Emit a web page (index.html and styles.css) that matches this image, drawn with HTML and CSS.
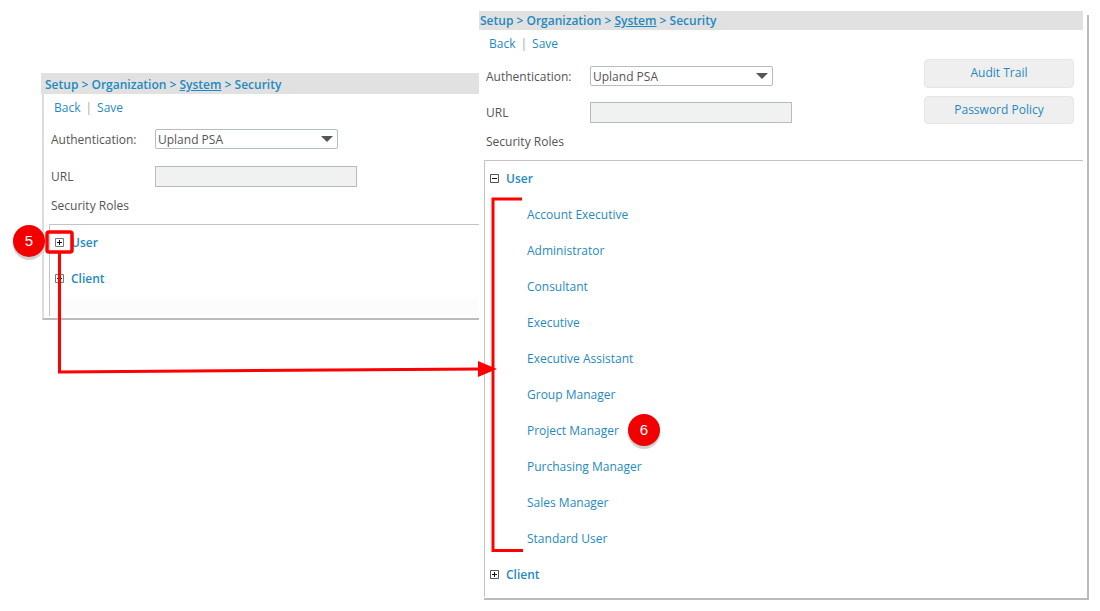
FILE: index.html
```html
<!DOCTYPE html>
<html lang="en">
<head>
<meta charset="utf-8">
<title>Security</title>
<link rel="stylesheet" href="styles.css">
</head>
<body>
<section class="window window-left">
  <div class="crumbs"><span>Setup &gt; Organization &gt; <u>System</u> &gt; Security</span></div>
  <div class="body">
    <div class="actions"><a>Back</a><i>|</i><a>Save</a></div>
    <div class="field field-auth"><label>Authentication:</label><div class="select"><span>Upland PSA</span><b></b></div></div>
    <div class="field field-url"><label>URL</label><div class="input"></div></div>
    <div class="roles">Security Roles</div>
    <div class="tree">
      <div class="node"><svg class="box" viewBox="0 0 9 9"><path d="M.5.5h8v8h-8z" fill="none" stroke="#777"/><path d="M2 4.5h5M4.5 2v5" stroke="#111"/></svg><strong>User</strong></div>
      <div class="node"><svg class="box" viewBox="0 0 9 9"><path d="M.5.5h8v8h-8z" fill="none" stroke="#777"/><path d="M2 4.5h5M4.5 2v5" stroke="#111"/></svg><strong>Client</strong></div>
      <div class="stripe"></div>
    </div>
  </div>
</section>

<section class="window window-right">
  <div class="crumbs"><span>Setup &gt; Organization &gt; <u>System</u> &gt; Security</span></div>
  <div class="body">
    <div class="actions"><a>Back</a><i>|</i><a>Save</a></div>
    <div class="side-buttons"><a class="button">Audit Trail</a><a class="button">Password Policy</a></div>
    <div class="field field-auth"><label>Authentication:</label><div class="select"><span>Upland PSA</span><b></b></div></div>
    <div class="field field-url"><label>URL</label><div class="input"></div></div>
    <div class="roles">Security Roles</div>
    <div class="tree">
      <div class="node"><svg class="box" viewBox="0 0 9 9"><path d="M.5.5h8v8h-8z" fill="none" stroke="#555"/><path d="M2 4.5h5" stroke="#111"/></svg><strong>User</strong></div>
      <ul class="children">
        <li>Account Executive</li>
        <li>Administrator</li>
        <li>Consultant</li>
        <li>Executive</li>
        <li>Executive Assistant</li>
        <li>Group Manager</li>
        <li>Project Manager</li>
        <li>Purchasing Manager</li>
        <li>Sales Manager</li>
        <li>Standard User</li>
      </ul>
      <div class="node"><svg class="box" viewBox="0 0 9 9"><path d="M.5.5h8v8h-8z" fill="none" stroke="#555"/><path d="M2 4.5h5M4.5 2v5" stroke="#111"/></svg><strong>Client</strong></div>
    </div>
  </div>
</section>

<svg class="marks" viewBox="0 0 1100 611" aria-hidden="true">
  <rect x="47" y="232" width="25" height="20" rx="2" fill="none" stroke="#f00" stroke-width="3.500"/>
  <path d="M59.5 253V372L482 369" fill="none" stroke="#f00" stroke-width="3"/>
  <path d="M478 361L497 369L478 377z" fill="#f00"/>
  <path d="M522 199H493V550.500H523" fill="none" stroke="#f00" stroke-width="3"/>
</svg>
<div class="badge badge-5">5</div>
<div class="badge badge-6">6</div>
</body>
</html>
```

FILE: styles.css
```css
* { box-sizing: border-box; }
html, body { margin: 0; padding: 0; background: #fff; }
body {
  width: 1100px;
  height: 611px;
  overflow: hidden;
  position: relative;
  font-family: "Open Sans", "Liberation Sans", sans-serif;
  font-size: 12px;
  color: #555;
}
.window { position: absolute; background: #fff; }
.window-left { left: 41px; top: 73px; width: 438px; height: 247px; overflow: hidden; }
.window-right { left: 479px; top: 11px; width: 610px; height: 589px; z-index: 0; }

.crumbs {
  background: #e1e1e1;
  color: #1f8ac0;
  font-size: 12px;
  font-weight: 600;
  white-space: nowrap;
}
.window-left .crumbs { height: 21px; padding: 3px 0 0 4px; line-height: 18px; }
.window-right .crumbs { height: 19px; width: 604px; padding: 1px 0 0 1px; line-height: 18px; }

.body { position: relative; }
.window-left .body {
  height: 226px;
  margin-left: 1px;
  padding-left: 1px;
  border-left: 2px solid #dcdcdc;
  border-bottom: 2px solid #bbb;
}
.window-right .body { height: 570px; }
.window-right .body::before {
  content: "";
  position: absolute;
  right: 0;
  top: -15px;
  bottom: 0;
  width: 2px;
  background: #bbb;
  z-index: -1;
}
.window-right::after {
  content: "";
  position: absolute;
  left: 5px;
  right: 0;
  bottom: 0;
  height: 2px;
  background: #bbb;
}

.actions { display: flex; align-items: center; color: #1f8ac0; line-height: 16px; }
.actions i { font-style: normal; margin: 0 5px; }
.window-left .actions { padding: 6px 0 0 9px; }
.window-left .actions i { color: #b5a58f; }
.window-right .actions { padding: 6px 0 0 10px; }
.window-right .actions i { color: #8fa9b8; }

.field { display: flex; align-items: center; }
.field label { display: block; width: 104px; }
.window-left .field { padding-left: 6px; }
.window-right .field { padding-left: 7px; }
.window-left .field-auth { margin-top: 13px; }
.window-right .field-auth { margin-top: 14px; }
.window-left .field-url { margin-top: 17px; }
.window-right .field-url { margin-top: 16px; }

.select {
  width: 183px;
  height: 20px;
  border: 1px solid #b4bdc1;
  border-radius: 2px;
  background: #fff;
  display: flex;
  align-items: center;
  justify-content: space-between;
  padding: 0 4px 0 2px;
}
.select b {
  width: 0;
  height: 0;
  border-left: 6px solid transparent;
  border-right: 6px solid transparent;
  border-top: 6px solid #555;
}
.input {
  width: 202px;
  height: 21px;
  border: 1px solid #b4bdc1;
  background: #f1f1f1;
}
.roles { line-height: 16px; margin-top: 11px; }
.window-left .roles { padding-left: 6px; }
.window-right .roles { padding-left: 7px; }

.tree { border-top: 1px solid #c4c4c4; border-left: 1px solid #c4c4c4; }
.window-left .tree { margin: 10px 0 0 4px; height: 92px; position: relative; }
.window-right .tree { margin: 10px 0 0 5px; width: 599px; height: 437px; }

.node { display: flex; align-items: center; height: 36px; padding-bottom: 2px; color: #1f8ac0; }
.node strong { font-weight: 600; }
.box { width: 9px; height: 9px; display: block; margin: 0 7px 0 5px; }

.stripe { position: absolute; left: 0; right: 0; bottom: 0; height: 19px; background: #fcfcfc; }

.children { list-style: none; margin: 0; padding: 0 0 0 42px; color: #1f8ac0; }
.children li { height: 36px; line-height: 36px; }

.side-buttons {
  position: absolute;
  left: 445px;
  top: 29px;
  display: flex;
  flex-direction: column;
  gap: 8px;
}
.button {
  display: flex;
  align-items: center;
  justify-content: center;
  width: 150px;
  height: 29px;
  padding-bottom: 2px;
  background: #efefef;
  border: 1px solid #e6e6e6;
  border-radius: 4px;
  color: #1f8ac0;
}
.button + .button { height: 28px; }

.marks { position: absolute; left: 0; top: 0; width: 1100px; height: 611px; z-index: 2; pointer-events: none; }
.badge {
  position: absolute;
  z-index: 3;
  width: 32px;
  height: 32px;
  border-radius: 50%;
  background: #f20000;
  color: #fff;
  font-family: "Liberation Sans", Arial, sans-serif;
  font-size: 15px;
  line-height: 32px;
  text-align: center;
  box-shadow: 0 3px 1px 0 #cfcfcf;
}
.badge-5 { left: 13px; top: 225px; }
.badge-6 { left: 628px; top: 414px; }
```
